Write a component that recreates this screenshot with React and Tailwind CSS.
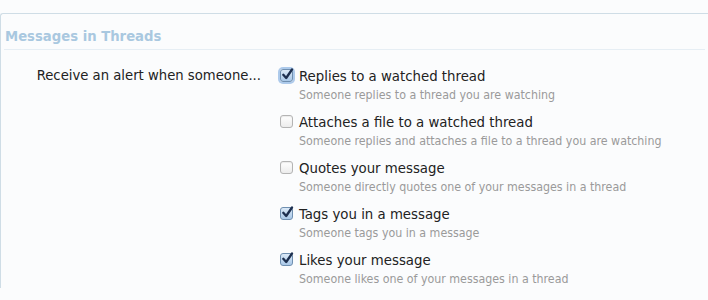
import React from 'react';

const options = [
  { title: 'Replies to a watched thread', desc: 'Someone replies to a thread you are watching', checked: true, focused: true },
  { title: 'Attaches a file to a watched thread', desc: 'Someone replies and attaches a file to a thread you are watching', checked: false },
  { title: 'Quotes your message', desc: 'Someone directly quotes one of your messages in a thread', checked: false },
  { title: 'Tags you in a message', desc: 'Someone tags you in a message', checked: true },
  { title: 'Likes your message', desc: 'Someone likes one of your messages in a thread', checked: true },
];

const Checkbox = ({ checked, focused }) => {
  if (!checked) {
    return (
      <span className="block w-[13px] h-[13px] rounded-[3px] border border-[#b4b4b4] bg-gradient-to-b from-[#ffffff] to-[#ececec] shadow-[inset_0_1px_1px_rgba(0,0,0,0.08)]" />
    );
  }
  return (
    <span
      className={
        'relative block w-[13px] h-[13px] rounded-[3px] border border-[#6f8fb0] bg-gradient-to-b from-[#dbe9f7] to-[#a9c8e8] ' +
        (focused ? 'shadow-[0_0_0_2px_rgba(110,160,220,0.55)]' : '')
      }
    >
      <svg viewBox="0 0 13 13" className="absolute left-[0px] top-[-2px] w-[13px] h-[13px]">
        <path d="M2.3 6.8 L5.2 10 L11 1.5" fill="none" stroke="#1d2f4f" strokeWidth="2.3" strokeLinecap="round" strokeLinejoin="round" />
      </svg>
    </span>
  );
};

export default function App() {
  return (
    <div className="w-[708px] h-[300px] bg-[#fbfcfd] overflow-hidden" style={{ fontFamily: '"DejaVu Sans Condensed", "DejaVu Sans", sans-serif' }}>
      <div className="pt-[13px]">
        <div className="border-t border-l border-[#cfdde6] rounded-tl-[3px]">
          <h3 className="mx-[3px] pl-[1px] pt-[13px] pb-[4px] border-b border-[#e6eef4] text-[14.7px] leading-[18px] font-bold text-[#a9c8e0]">
            Messages in Threads
          </h3>
          <div className="flex pt-[15px]">
            <div className="w-[262px] pr-[2px] pt-[1px] text-right text-[14.7px] leading-[18px] text-[#222]">
              Receive an alert when someone...
            </div>
            <ul className="ml-[17px] pt-[1px] flex flex-col gap-[8px]">
              {options.map((o) => (
                <li key={o.title} className="flex">
                  <div className="pt-[3px] w-[19px]">
                    <Checkbox checked={o.checked} focused={o.focused} />
                  </div>
                  <div>
                    <div className="text-[14.8px] leading-[20px] text-[#222]">{o.title}</div>
                    <div className="text-[12.3px] leading-[18px] text-[#9a9a9a]">{o.desc}</div>
                  </div>
                </li>
              ))}
            </ul>
          </div>
        </div>
      </div>
    </div>
  );
}
